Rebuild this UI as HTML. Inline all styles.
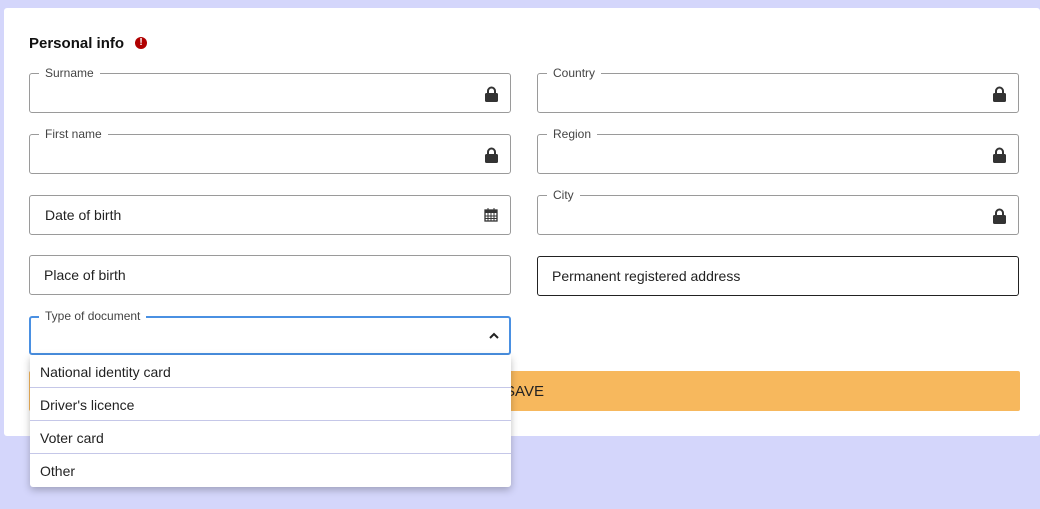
<!DOCTYPE html>
<html><head><style>
body{margin:0;width:1040px;height:509px;background:#d4d6fb;font-family:"Liberation Sans",sans-serif;position:relative;overflow:hidden}
.card{position:absolute;left:4px;top:8px;width:1036px;height:428px;background:#fff;border-radius:3px}
h1{position:absolute;left:29px;top:35px;margin:0;font-size:15px;font-weight:bold;color:#111}
.err{position:absolute;left:135px;top:37px;width:12px;height:12px;border-radius:50%;background:#b00000;color:#fff;font-size:10px;font-weight:bold;text-align:center;line-height:12px}
.f{position:absolute;width:480px;height:38px;border:1px solid #9a9a9a;border-radius:3px;box-sizing:content-box}
.lab{position:absolute;top:-8px;left:9px;background:#fff;padding:0 6px;font-size:12px;color:#444}
.txt{position:absolute;left:14px;top:11px;font-size:14px;color:#222}
.ic{position:absolute;right:11px;top:12px}
.dd{position:absolute;left:30px;top:355px;width:481px;height:132px;background:#fff;box-shadow:0 3px 8px rgba(0,0,0,.25);border-radius:0 0 3px 3px}
.dd div{height:32px;border-bottom:1px solid #c5c7e8;font-size:14px;color:#222;padding-left:10px;line-height:34px}
.dd div:last-child{border:none}
</style></head><body>
<div class="card"></div>
<h1>Personal info</h1><div class="err">!</div>

<div class="f" style="left:29px;top:73px"><span class="lab">Surname</span><svg class="ic" width="15" height="16" viewBox="0 0 15 16"><path d="M4 7V5a3.5 3.5 0 0 1 7 0v2" fill="none" stroke="#333" stroke-width="2"/><rect x="1" y="7" width="13" height="9" rx="1.5" fill="#333"/></svg></div>
<div class="f" style="left:29px;top:134px"><span class="lab">First name</span><svg class="ic" width="15" height="16" viewBox="0 0 15 16"><path d="M4 7V5a3.5 3.5 0 0 1 7 0v2" fill="none" stroke="#333" stroke-width="2"/><rect x="1" y="7" width="13" height="9" rx="1.5" fill="#333"/></svg></div>
<div class="f" style="left:29px;top:195px"><span class="txt" style="left:15px">Date of birth</span><svg class="ic" width="14" height="14" viewBox="0 0 14 14" style="top:12px;right:12px"><rect x="1" y="2" width="12" height="11" fill="none" stroke="#333" stroke-width="1.3"/><rect x="1" y="2" width="12" height="3" fill="#333"/><path d="M4 0v3M10 0v3M1 8h12M1 10.5h12M4 5v8M7 5v8M10 5v8" stroke="#333" stroke-width="1"/></svg></div>
<div class="f" style="left:29px;top:255px"><span class="txt">Place of birth</span></div>
<div class="f" style="left:29px;top:316px;border:2px solid #4a90e2;width:478px;height:35px"><span class="lab" style="left:8px;top:-9px">Type of document</span><svg class="ic" width="12" height="8" viewBox="0 0 12 8" style="top:14px;right:9px"><path d="M2 6l4-4 4 4" fill="none" stroke="#222" stroke-width="2"/></svg></div>

<div class="f" style="left:537px;top:73px"><span class="lab">Country</span><svg class="ic" width="15" height="16" viewBox="0 0 15 16"><path d="M4 7V5a3.5 3.5 0 0 1 7 0v2" fill="none" stroke="#333" stroke-width="2"/><rect x="1" y="7" width="13" height="9" rx="1.5" fill="#333"/></svg></div>
<div class="f" style="left:537px;top:134px"><span class="lab">Region</span><svg class="ic" width="15" height="16" viewBox="0 0 15 16"><path d="M4 7V5a3.5 3.5 0 0 1 7 0v2" fill="none" stroke="#333" stroke-width="2"/><rect x="1" y="7" width="13" height="9" rx="1.5" fill="#333"/></svg></div>
<div class="f" style="left:537px;top:195px"><span class="lab">City</span><svg class="ic" width="15" height="16" viewBox="0 0 15 16"><path d="M4 7V5a3.5 3.5 0 0 1 7 0v2" fill="none" stroke="#333" stroke-width="2"/><rect x="1" y="7" width="13" height="9" rx="1.5" fill="#333"/></svg></div>
<div class="f" style="left:537px;top:256px;border-color:#222"><span class="txt">Permanent registered address</span></div>

<div style="position:absolute;left:29px;top:371px;width:991px;height:40px;background:#f7b85d;border-radius:2px;text-align:center;line-height:41px;font-size:15px;color:#222">SAVE</div>

<div class="dd"><div>National identity card</div><div>Driver's licence</div><div>Voter card</div><div>Other</div></div>
</body></html>
